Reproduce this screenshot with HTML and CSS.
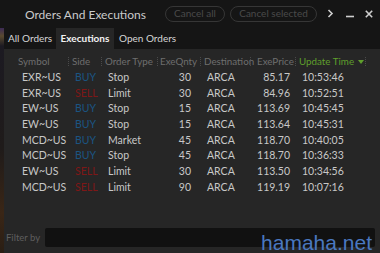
FILE: index.html
```html
<!DOCTYPE html>
<html lang="en">
<head>
	<meta charset="UTF-8">
	<title>Orders And Executions</title>
	<link rel="stylesheet" href="styles.css">
</head>
<body>
	<div class="window">
		<div class="title-bar">
			<span class="title">Orders And Executions</span>
			<span class="pill-btn btn-all">Cancel all</span>
			<span class="pill-btn btn-sel">Cancel selected</span>
			<span class="win-icon icon-more">
				<svg width="7" height="9" viewBox="0 0 7 9"><path d="M1.5 1 L5 4.5 L1.5 8" fill="none" stroke="#cfcfcf" stroke-width="1.6"/></svg>
			</span>
			<span class="win-icon icon-min">
				<svg width="8" height="9" viewBox="0 0 8 9"><path d="M0 7.5 H8" stroke="#cfcfcf" stroke-width="1.6"/></svg>
			</span>
			<span class="win-icon icon-close">
				<svg width="8" height="8" viewBox="0 0 8 8"><path d="M0.8 0.8 L7.2 7.2 M7.2 0.8 L0.8 7.2" stroke="#cfcfcf" stroke-width="1.6"/></svg>
			</span>
		</div>
		<div class="main">
			<div class="desk"></div>
			<div class="panel-wrap">
				<ul class="tabs">
					<li class="tab-all">All Orders</li>
					<li class="active">Executions</li>
					<li>Open Orders</li>
				</ul>
				<div class="panel">
					<div class="grid">
						<div class="row head">
							<span class="c1">Symbol</span>
							<span class="c2">Side</span>
							<span class="c3">Order Type</span>
							<span class="c4">ExeQnty</span>
							<span class="c5">Destination</span>
							<span class="c6">ExePrice</span>
							<span class="c7 sorted">Update Time <i class="arrow"></i></span>
						</div>
						<div class="row">
							<span class="c1">EXR~US</span><span class="c2 buy">BUY</span><span class="c3">Stop</span><span class="c4 num">30</span><span class="c5">ARCA</span><span class="c6 num">85.17</span><span class="c7">10:53:46</span>
						</div>
						<div class="row">
							<span class="c1">EXR~US</span><span class="c2 sell">SELL</span><span class="c3">Limit</span><span class="c4 num">30</span><span class="c5">ARCA</span><span class="c6 num">84.96</span><span class="c7">10:52:51</span>
						</div>
						<div class="row">
							<span class="c1">EW~US</span><span class="c2 buy">BUY</span><span class="c3">Stop</span><span class="c4 num">15</span><span class="c5">ARCA</span><span class="c6 num">113.69</span><span class="c7">10:45:45</span>
						</div>
						<div class="row">
							<span class="c1">EW~US</span><span class="c2 buy">BUY</span><span class="c3">Stop</span><span class="c4 num">15</span><span class="c5">ARCA</span><span class="c6 num">113.64</span><span class="c7">10:45:31</span>
						</div>
						<div class="row">
							<span class="c1">MCD~US</span><span class="c2 buy">BUY</span><span class="c3">Market</span><span class="c4 num">45</span><span class="c5">ARCA</span><span class="c6 num">118.70</span><span class="c7">10:40:05</span>
						</div>
						<div class="row">
							<span class="c1">MCD~US</span><span class="c2 buy">BUY</span><span class="c3">Stop</span><span class="c4 num">45</span><span class="c5">ARCA</span><span class="c6 num">118.70</span><span class="c7">10:36:33</span>
						</div>
						<div class="row">
							<span class="c1">EW~US</span><span class="c2 sell">SELL</span><span class="c3">Limit</span><span class="c4 num">30</span><span class="c5">ARCA</span><span class="c6 num">113.50</span><span class="c7">10:34:56</span>
						</div>
						<div class="row">
							<span class="c1">MCD~US</span><span class="c2 sell">SELL</span><span class="c3">Limit</span><span class="c4 num">90</span><span class="c5">ARCA</span><span class="c6 num">119.19</span><span class="c7">10:07:16</span>
						</div>
					</div>
					<div class="filter">
						<span class="filter-label">Filter by</span>
						<input class="filter-input" type="text">
					</div>
					<span class="watermark">hamaha.net</span>
				</div>
			</div>
		</div>
	</div>
</body>
</html>
```

FILE: styles.css
```css
*{
	margin: 0;
	padding: 0;
	box-sizing: border-box;
}
li{
	list-style: none;
}
html,body{
	width: 380px;
	height: 253px;
	overflow: hidden;
	background: #151515;
}
body{
	font-family: Lato, "Open Sans", sans-serif;
	color: #c8c8c8;
}
.window{
	width: 380px;
	height: 253px;
	display: flex;
	flex-direction: column;
}
.title-bar{
	height: 28px;
	display: flex;
	align-items: center;
	padding-left: 25px;
	background: #151515;
}
.title{
	font-size: 12px;
	color: #cbcbcb;
	width: 140px;
	white-space: nowrap;
}
.pill-btn{
	height: 16px;
	line-height: 13px;
	border: 1.5px solid #363636;
	border-radius: 8px;
	font-size: 10px;
	color: #4a4a4a;
	text-align: center;
	margin-top: -1px;
	white-space: nowrap;
}
.btn-all{
	width: 60px;
}
.btn-sel{
	width: 87px;
	margin-left: 5px;
}
.win-icon{
	display: flex;
	align-items: center;
	justify-content: center;
	height: 12px;
	margin-top: -1px;
}
.icon-more{
	margin-left: 10px;
}
.icon-min{
	margin-left: 12px;
}
.icon-close{
	margin-left: 11px;
}
.main{
	flex: 1;
	display: flex;
	min-height: 0;
}
.desk{
	width: 4px;
	background: linear-gradient(#3b2a55 0, #5a4a30 8px, #1c1a22 18px, #1f1b1a 120px, #3a2616 185px, #2a1e14 225px);
}
.panel-wrap{
	flex: 1;
	display: flex;
	flex-direction: column;
	min-width: 0;
}
.tabs{
	height: 21px;
	display: flex;
	font-size: 10px;
	background: #151515;
}
.tabs li{
	padding: 0 5px;
	line-height: 21px;
	color: #d6d6d6;
	white-space: nowrap;
}
.tabs li.tab-all{
	width: 52px;
	padding-left: 4px;
}
.tabs li.active{
	width: 58px;
	background: #262626;
	color: #f2f2f2;
	font-weight: bold;
	text-align: center;
	padding: 0;
}
.panel{
	flex: 1;
	position: relative;
	background: #262626;
	display: flex;
	flex-direction: column;
	padding-top: 4px;
}
.grid{
	flex: 1;
	padding-left: 10px;
	font-size: 10.5px;
}
.row{
	display: grid;
	grid-template-columns: 55px 33px 56px 43px 50px 45px 70px;
	height: 15.7px;
	line-height: 15.7px;
	white-space: nowrap;
}
.row span{
	padding-left: 6px;
	overflow: hidden;
}
.row .c1{
	padding-left: 8px;
}
.row .num{
	text-align: right;
	padding-left: 0;
}
.row .c4{
	padding-right: 10px;
}
.row .c6{
	padding-right: 6px;
}
.row.head{
	height: 16px;
	line-height: 16px;
	margin-bottom: 1px;
	color: #6e6e6e;
	font-size: 9.8px;
}
.row.head span{
	position: relative;
	padding-left: 3px;
	padding-right: 0;
	text-align: left;
	overflow: visible;
}
.row.head .c1{
	padding-left: 4px;
}
.row.head .c4{
	padding-left: 2px;
}
.row.head .c6{
	padding-left: 6px;
}
.row.head span:after{
	content: "";
	position: absolute;
	right: 0;
	top: 4px;
	height: 9px;
	border-right: 1px dotted #4a4a4a;
}
.row.head .sorted{
	color: #5f9f2c;
}
.arrow{
	display: inline-block;
	width: 0;
	height: 0;
	border-left: 3px solid transparent;
	border-right: 3px solid transparent;
	border-top: 4px solid #5f9f2c;
	vertical-align: 1px;
	margin-left: 1px;
}
.buy{
	color: #1b5482;
}
.sell{
	color: #7e1717;
}
.filter{
	display: flex;
	align-items: center;
	padding: 0 5px 4px 2px;
	height: 28px;
}
.filter-label{
	font-size: 9.5px;
	color: #5e5e5e;
	width: 39px;
	white-space: nowrap;
}
.filter-input{
	flex: 1;
	height: 19px;
	background: #111111;
	border: none;
	border-radius: 2px;
	outline: none;
}
.watermark{
	position: absolute;
	right: 8px;
	bottom: -2px;
	font-family: "Liberation Sans", Arial, sans-serif;
	font-size: 21px;
	color: #4a78c0;
	line-height: 24px;
}
```
